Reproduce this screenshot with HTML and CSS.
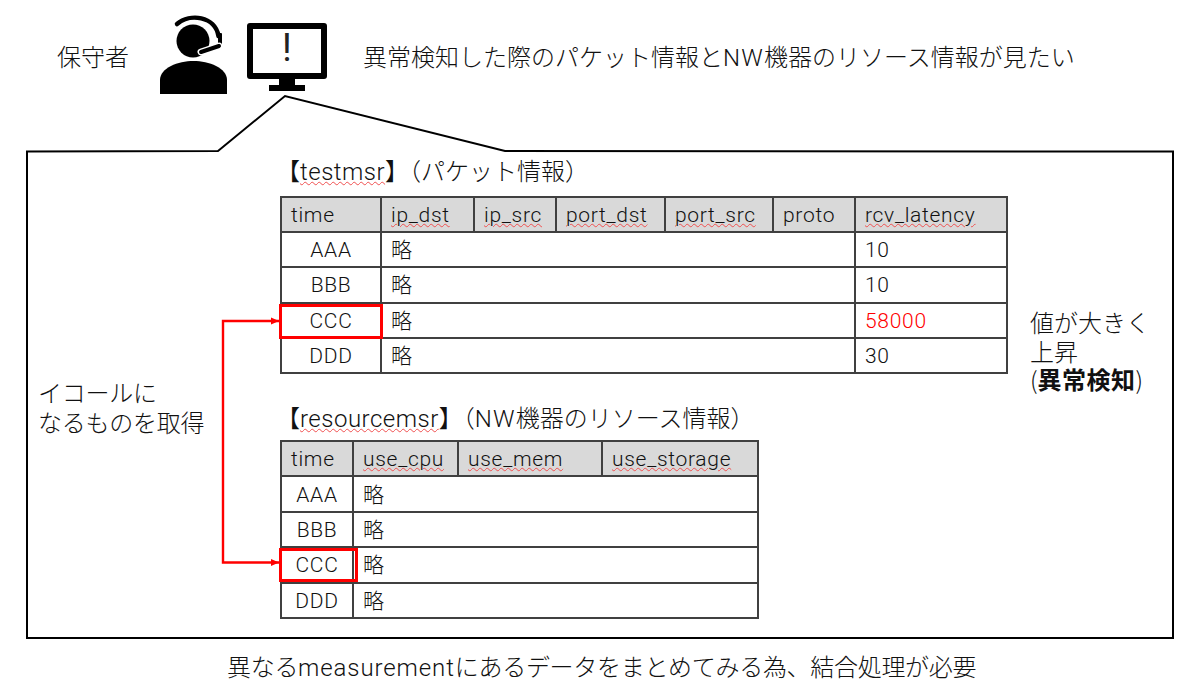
FILE: index.html
```html
<!DOCTYPE html>
<html lang="ja">
<head>
<meta charset="utf-8">
<title>異常検知</title>
<link rel="stylesheet" href="styles.css">
</head>
<body>
<main class="slide">
  <svg class="art" width="1197" height="697" viewBox="0 0 1197 697" aria-hidden="true">
    <path class="frame" d="M218 151 L285 96 L505 151 L1173 151.500 V638 H27 V151.500 Z"/>
    <g class="ink">
      <circle cx="193" cy="41" r="16.5"/>
      <path d="M160 94 V80 C160 68 178 61 193.500 61 C209 61 227 68 227 80 V94 Z"/>
      <path class="band" d="M177 24 C190 13 215 16 218.500 36"/>
      <rect x="218" y="33" width="4" height="14" rx="1"/>
      <path class="halo" d="M219 46 L201 52"/>
      <path class="boom" d="M219 46 L201 52"/>
      <path fill-rule="evenodd" d="M250 23 H324 A3 3 0 0 1 327 26 V76 A3 3 0 0 1 324 79 H250 A3 3 0 0 1 247 76 V26 A3 3 0 0 1 250 23 Z M253 29 V73 H321 V29 Z"/>
      <path d="M279 79 H295 V85 H305 V91 H269 V85 H279 Z"/>
    </g>
    <path class="link" d="M279 321 H223 V562.500 H279"/>
    <path class="tip" d="M279 321 L271 317.500 V324.500 Z M279 562.500 L271 559 V566 Z"/>
  </svg>

  <p class="label bang">!</p>
  <p class="label who">保守者</p>
  <p class="label want">異常検知した際のパケット情報と<span class="lat">NW</span>機器のリソース情報が見たい</p>

  <h2 class="label title-a">【<span class="sq lat tight">testmsr</span>】（パケット情報）</h2>
  <table class="grid table-a">
    <colgroup><col class="a1"><col class="a2"><col class="a3"><col class="a4"><col class="a5"><col class="a6"><col class="a7"></colgroup>
    <tr class="head"><th>time</th><th><span class="sq">ip_dst</span></th><th><span class="sq">ip_src</span></th><th><span class="sq">port_dst</span></th><th><span class="sq">port_src</span></th><th>proto</th><th><span class="sq">rcv_latency</span></th></tr>
    <tr><td class="key">AAA</td><td colspan="5">略</td><td>10</td></tr>
    <tr><td class="key">BBB</td><td colspan="5">略</td><td>10</td></tr>
    <tr><td class="key">CCC</td><td colspan="5">略</td><td class="alert">58000</td></tr>
    <tr><td class="key">DDD</td><td colspan="5">略</td><td>30</td></tr>
  </table>

  <p class="label note">値が大きく<br>上昇<br>(<b>異常検知</b>)</p>
  <p class="label equal">イコールに<br>なるものを取得</p>

  <h2 class="label title-b">【<span class="sq lat tight">resourcemsr</span>】（<span class="lat">NW</span>機器のリソース情報）</h2>
  <table class="grid table-b">
    <colgroup><col class="b1"><col class="b2"><col class="b3"><col class="b4"></colgroup>
    <tr class="head"><th>time</th><th><span class="sq">use_cpu</span></th><th><span class="sq">use_mem</span></th><th><span class="sq">use_storage</span></th></tr>
    <tr><td class="key">AAA</td><td colspan="3">略</td></tr>
    <tr><td class="key">BBB</td><td colspan="3">略</td></tr>
    <tr><td class="key">CCC</td><td colspan="3">略</td></tr>
    <tr><td class="key">DDD</td><td colspan="3">略</td></tr>
  </table>

  <div class="mark mark-a"></div>
  <div class="mark mark-b"></div>

  <p class="label foot">異なる<span class="lat">measurement</span>にあるデータをまとめてみる為、結合処理が必要</p>
</main>
</body>
</html>
```
FILE: styles.css
```css
* { box-sizing: border-box; }
html, body { margin: 0; padding: 0; background: #fff; }
.slide {
  position: relative;
  width: 1197px;
  height: 697px;
  overflow: hidden;
  color: #111;
  font-family: "Noto Sans CJK JP", "Noto Sans", sans-serif;
  font-weight: 300;
}
.art { position: absolute; left: 0; top: 0; }
.frame { fill: none; stroke: #000; stroke-width: 2; }
.ink { fill: #000; }
.band, .boom, .halo { fill: none; stroke-linecap: round; }
.band { stroke: #000; stroke-width: 4.5; }
.boom { stroke: #000; stroke-width: 4; }
.halo { stroke: #fff; stroke-width: 7; }
.link { fill: none; stroke: #f00; stroke-width: 2.4; }
.tip { fill: #f00; }

.label { position: absolute; margin: 0; white-space: nowrap; font-weight: 300; font-size: 24px; line-height: 1; }
.lat { font-family: Roboto, "Noto Sans", sans-serif; letter-spacing: 1.2px; }
.lat.tight { letter-spacing: 0.5px; }
.bang { left: 279px; top: 29px; width: 16px; text-align: center; font: 400 38px/1 Roboto, sans-serif; color: #222; }
.who { left: 57px; top: 44px; }
.want { left: 363px; top: 44px; }
.title-a { left: 276px; top: 158px; }
.title-b { left: 276px; top: 405px; }
.note { left: 1030px; top: 308px; line-height: 28.5px; }
.note b { font-weight: 700; letter-spacing: 0.5px; }
.equal { left: 38px; top: 377px; line-height: 30px; letter-spacing: -0.25px; }
.foot { left: 227px; top: 654px; letter-spacing: -0.3px; }
.foot .lat { letter-spacing: 0.9px; }

.sq { text-decoration: underline wavy #f05050 1px; text-underline-offset: 1px; }

.grid {
  position: absolute;
  border-collapse: collapse;
  table-layout: fixed;
  font-size: 21px;
  font-family: Roboto, "Noto Sans CJK JP", sans-serif;
  letter-spacing: 0.7px;
}
.grid th, .grid td {
  border: 2px solid #404040;
  padding: 2px 0 0 9px;
  height: 35.2px;
  text-align: left;
  font-weight: 300;
  line-height: 1;
}
.grid .head th { background: #d9d9d9; }
.grid td.key { text-align: center; padding: 2px 0 0; }
.grid td.alert { color: #f00; }
.table-a { left: 280px; top: 196px; width: 726px; }
.table-b { left: 280px; top: 440px; width: 477px; }
.table-b th, .table-b td { height: 35.4px; }
.a1 { width: 100px; } .a2 { width: 93px; } .a3 { width: 82px; } .a4 { width: 109px; }
.a5 { width: 108px; } .a6 { width: 82px; } .a7 { width: 152px; }
.b1 { width: 72px; } .b2 { width: 105px; } .b3 { width: 144px; } .b4 { width: 156px; }

.mark { position: absolute; border: 3px solid #f00; }
.mark-a { left: 279px; top: 304px; width: 104px; height: 35px; }
.mark-b { left: 279px; top: 548px; width: 79px; height: 34px; }
```
